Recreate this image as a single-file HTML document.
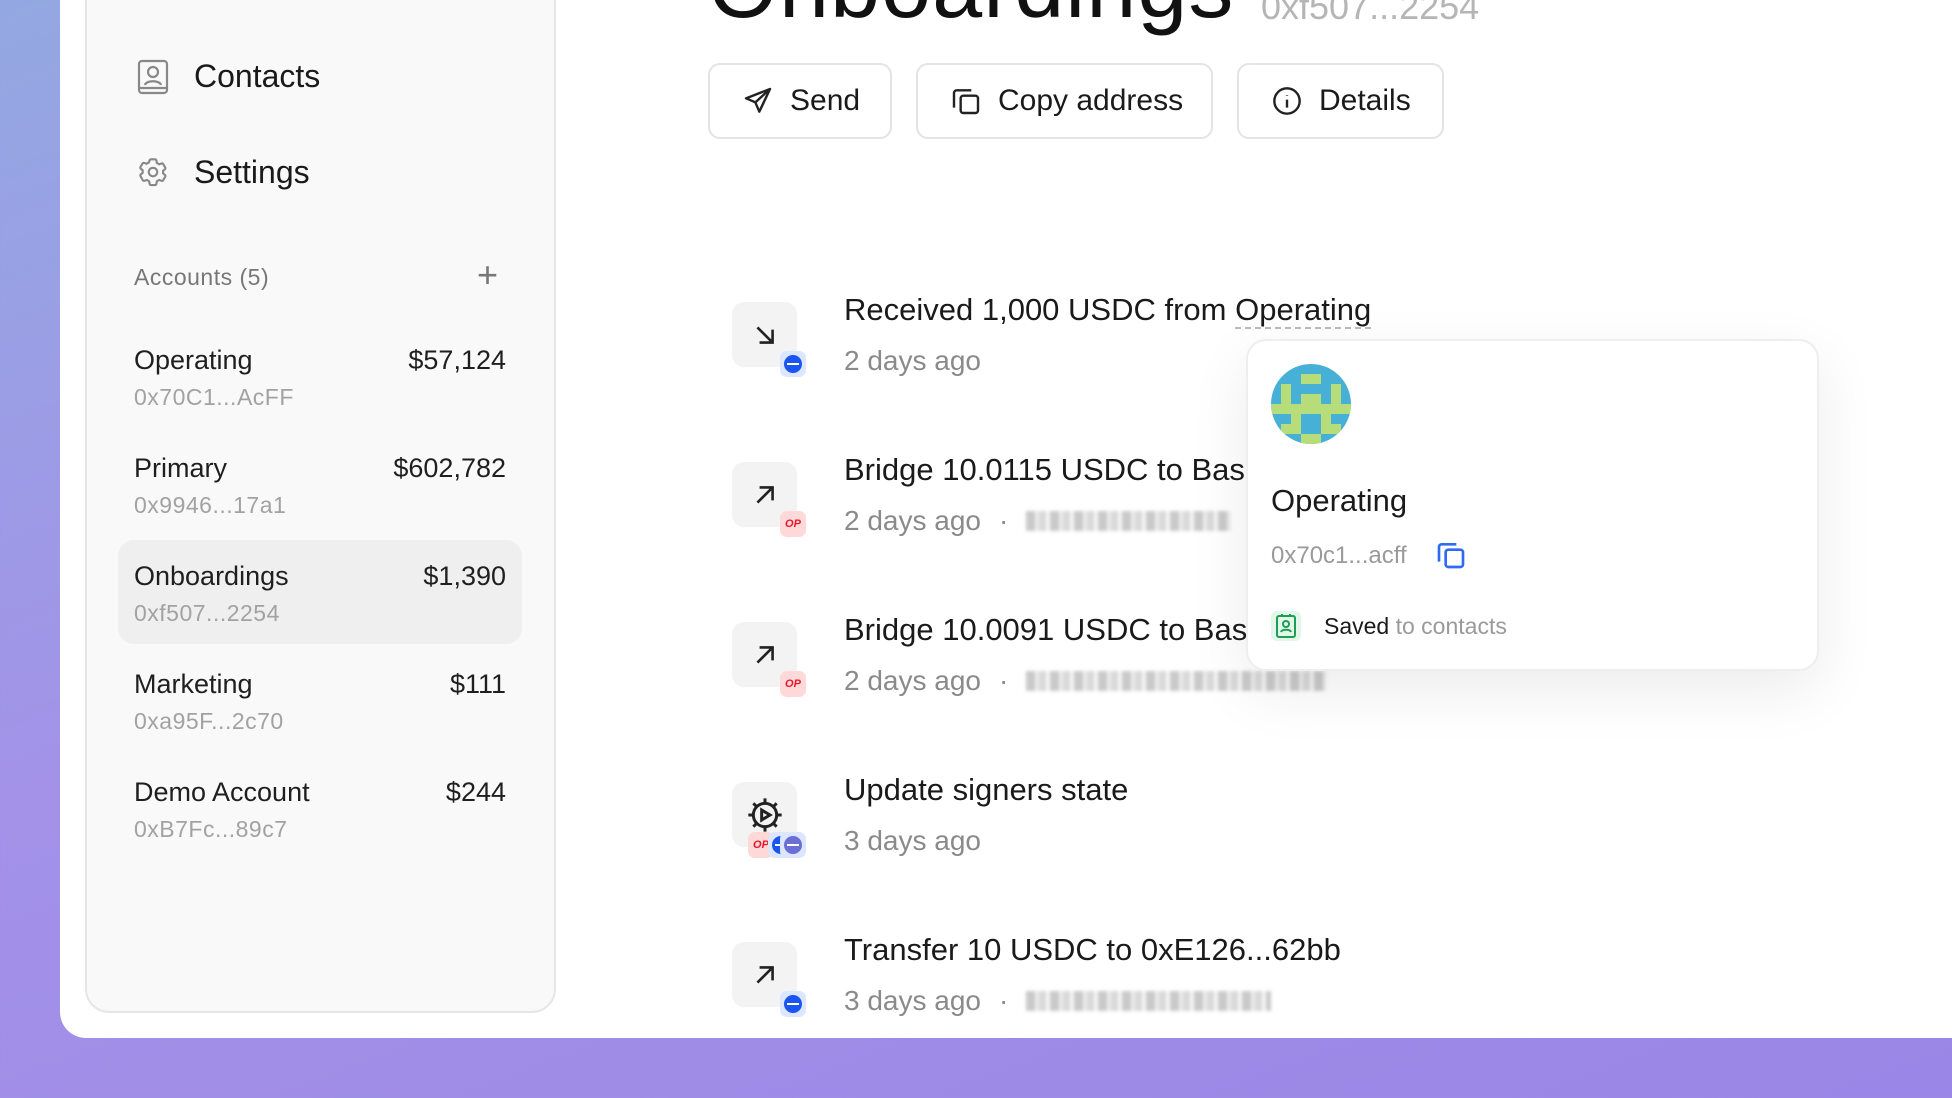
<!DOCTYPE html>
<html><head><meta charset="utf-8"><style>
*{margin:0;padding:0;box-sizing:border-box}
body{width:1952px;height:1098px;overflow:hidden;font-family:"Liberation Sans",sans-serif;background:linear-gradient(160deg,#93a8e2 0%,#a392e8 45%,#9a86e6 100%);position:relative}
.win{position:absolute;left:60px;top:-40px;width:1960px;height:1078px;background:#fff;border-radius:0 0 0 26px}
.side{position:absolute;left:85px;top:-40px;width:471px;height:1053px;background:#f9f9f9;border:2px solid #e6e6e6;border-radius:0 0 24px 24px}
.a{position:absolute}
.nav{font-size:32px;color:#1a1a1a}
.acc{position:absolute;left:134px;width:372px}
.acc .n{font-size:27px;color:#1f1f1f;display:flex;justify-content:space-between}
.acc .d{font-size:23px;color:#a2a2a2;margin-top:8px;letter-spacing:0.5px}
.btn{position:absolute;top:63px;height:76px;border:2px solid #e4e4e4;border-radius:12px;display:flex;align-items:center;font-size:30px;color:#1a1a1a;padding-left:32px;gap:16px}
.ic{position:absolute;left:732px;width:65px;height:65px;background:#f3f3f3;border-radius:12px;display:flex;align-items:center;justify-content:center}
.t{position:absolute;left:844px;font-size:31px;color:#1a1a1a}
.s{position:absolute;left:844px;font-size:28px;color:#8a8a8a;display:flex;align-items:center;gap:18px}
.blur{display:inline-block;height:20px;background:repeating-linear-gradient(90deg,#bdbdbd 0 9px,#e8e8e8 9px 13px,#cfcfcf 13px 20px,#f4f4f4 20px 24px);filter:blur(1.5px);opacity:.8}
.badge{position:absolute;width:26px;height:26px;border-radius:7px;display:flex;align-items:center;justify-content:center}
.op{background:#ffd8d8;color:#e8162b;font-size:11px;font-weight:bold;font-style:italic}
.eth{background:#dce6ff}
.eth i{width:18px;height:18px;border-radius:50%;background:#1b55f0;display:block;position:relative}
.eth i:after{content:"";position:absolute;left:3px;right:3px;top:8px;height:2px;background:#fff}
</style></head><body>
<div class="win"></div>
<div class="side"></div>
<svg class="a" style="left:137px;top:59px" width="32" height="36" viewBox="0 0 32 36" fill="none" stroke="#888" stroke-width="2.2"><rect x="2" y="2" width="28" height="32" rx="3"/><circle cx="16" cy="13" r="5"/><path d="M8 26c1-5 15-5 16 0"/><path d="M2 29h28"/></svg>
<div class="a nav" style="left:194px;top:58px">Contacts</div>
<svg class="a" style="left:136px;top:155px" width="34" height="34" viewBox="0 0 24 24" fill="none" stroke="#888" stroke-width="1.5"><path d="M9.6 3.9c.1-.5.5-.9 1-.9h2.8c.5 0 .9.4 1 .9l.3 1.7c.6.3 1.1.6 1.6 1l1.6-.6c.5-.2 1 0 1.3.4l1.4 2.4c.3.4.2 1-.2 1.3l-1.3 1.1v1.8l1.3 1.1c.4.3.5.9.2 1.3l-1.4 2.4c-.3.4-.8.6-1.3.4l-1.6-.6c-.5.4-1 .7-1.6 1l-.3 1.7c-.1.5-.5.9-1 .9h-2.8c-.5 0-.9-.4-1-.9l-.3-1.7c-.6-.3-1.1-.6-1.6-1l-1.6.6c-.5.2-1 0-1.3-.4L3.2 15c-.3-.4-.2-1 .2-1.3l1.3-1.1v-1.8L3.4 9.7C3 9.4 2.9 8.8 3.2 8.4l1.4-2.4c.3-.4.8-.6 1.3-.4l1.6.6c.5-.4 1-.7 1.6-1z"/><circle cx="12" cy="12" r="3"/></svg>
<div class="a nav" style="left:194px;top:154px">Settings</div>
<div class="a" style="left:134px;top:264px;font-size:23px;color:#777;letter-spacing:.5px">Accounts (5)</div>
<div class="a" style="left:477px;top:254px;font-size:36px;color:#777;font-weight:300">+</div>
<div class="a" style="left:118px;top:540px;width:404px;height:104px;background:#efefef;border-radius:16px"></div>
<div class="acc" style="top:345px"><div class="n"><span>Operating</span><span>$57,124</span></div><div class="d">0x70C1...AcFF</div></div>
<div class="acc" style="top:453px"><div class="n"><span>Primary</span><span>$602,782</span></div><div class="d">0x9946...17a1</div></div>
<div class="acc" style="top:561px"><div class="n"><span>Onboardings</span><span>$1,390</span></div><div class="d">0xf507...2254</div></div>
<div class="acc" style="top:669px"><div class="n"><span>Marketing</span><span>$111</span></div><div class="d">0xa95F...2c70</div></div>
<div class="acc" style="top:777px"><div class="n"><span>Demo Account</span><span>$244</span></div><div class="d">0xB7Fc...89c7</div></div>

<div class="a" style="left:708px;top:-64px;font-size:90px;color:#111;font-weight:500;letter-spacing:1px">Onboardings</div>
<div class="a" style="left:1261px;top:-14px;font-size:36px;color:#b5b5b5">0xf507...2254</div>

<div class="btn" style="left:708px;width:184px"><svg width="32" height="32" viewBox="0 0 24 24" fill="none" stroke="#222" stroke-width="1.8" stroke-linejoin="round"><path d="M21 3L3 10l7 3 3 7z"/><path d="M10 13l11-10"/></svg>Send</div>
<div class="btn" style="left:916px;width:297px"><svg width="32" height="32" viewBox="0 0 24 24" fill="none" stroke="#222" stroke-width="1.8"><rect x="8" y="8" width="13" height="13" rx="2"/><path d="M16 4H5a2 2 0 0 0-2 2v11"/></svg>Copy address</div>
<div class="btn" style="left:1237px;width:207px"><svg width="32" height="32" viewBox="0 0 24 24" fill="none" stroke="#222" stroke-width="1.8"><circle cx="12" cy="12" r="9.5"/><path d="M12 11v6M12 7.5v.5"/></svg>Details</div>

<div class="ic" style="top:302px"><svg width="26" height="26" viewBox="0 0 24 24" fill="none" stroke="#222" stroke-width="2.4"><path d="M5 5l14 14M19 7v12H7"/></svg></div>
<div class="badge eth" style="left:780px;top:351px"><i></i></div>
<div class="t" style="top:292px">Received 1,000 USDC from <span style="border-bottom:2px dashed #bbb">Operating</span></div>
<div class="s" style="top:345px">2 days ago</div>

<div class="ic" style="top:462px"><svg width="26" height="26" viewBox="0 0 24 24" fill="none" stroke="#222" stroke-width="2.4"><path d="M5 19L19 5M7 5h12v12"/></svg></div>
<div class="badge op" style="left:780px;top:511px">OP</div>
<div class="t" style="top:452px">Bridge 10.0115 USDC to Base</div>
<div class="s" style="top:505px">2 days ago <span>·</span><span class="blur" style="width:205px"></span></div>

<div class="ic" style="top:622px"><svg width="26" height="26" viewBox="0 0 24 24" fill="none" stroke="#222" stroke-width="2.4"><path d="M5 19L19 5M7 5h12v12"/></svg></div>
<div class="badge op" style="left:780px;top:671px">OP</div>
<div class="t" style="top:612px">Bridge 10.0091 USDC to Base</div>
<div class="s" style="top:665px">2 days ago <span>·</span><span class="blur" style="width:300px"></span></div>

<div class="ic" style="top:782px"><svg width="40" height="40" viewBox="0 0 24 24" fill="none" stroke="#222" stroke-width="1.8"><circle cx="12" cy="12" r="7"/><path d="M12 2v3M12 19v3M2 12h3M19 12h3M5 5l2 2M17 17l2 2M5 19l2-2M17 7l2-2M10 9l5 3-5 3z"/></svg></div>
<div class="badge op" style="left:748px;top:832px">OP</div>
<div class="badge eth" style="left:768px;top:832px"><i></i></div>
<div class="badge eth" style="left:780px;top:832px"><i style="background:#6a6fd8"></i></div>
<div class="t" style="top:772px">Update signers state</div>
<div class="s" style="top:825px">3 days ago</div>

<div class="ic" style="top:942px"><svg width="26" height="26" viewBox="0 0 24 24" fill="none" stroke="#222" stroke-width="2.4"><path d="M5 19L19 5M7 5h12v12"/></svg></div>
<div class="badge eth" style="left:780px;top:991px"><i></i></div>
<div class="t" style="top:932px">Transfer 10 USDC to 0xE126...62bb</div>
<div class="s" style="top:985px">3 days ago <span>·</span><span class="blur" style="width:245px"></span></div>

<div class="a" style="left:1246px;top:339px;width:573px;height:332px;background:#fff;border:2px solid #eee;border-radius:20px;box-shadow:0 20px 60px rgba(0,0,0,.08)">
<svg class="a" style="left:23px;top:23px" width="80" height="80" viewBox="0 0 8 8"><defs><clipPath id="c"><circle cx="4" cy="4" r="4"/></clipPath></defs><g clip-path="url(#c)"><rect width="8" height="8" fill="#46b0d6"/><path fill="#b7dc7a" d="M3 1h2v1H3zM1 2h1v2H1zM6 2h1v2H6zM3 3h2v1H3zM0 4h8v1H0zM2 5h1v1H2zM5 5h1v1H5zM1 6h2v1H1zM5 6h2v1H5zM3 7h2v1H3z"/></g></svg>
<div class="a" style="left:23px;top:142px;font-size:31px;color:#1a1a1a">Operating</div>
<div class="a" style="left:23px;top:201px;font-size:24px;color:#9a9a9a">0x70c1...acff</div>
<svg class="a" style="left:187px;top:198px" width="32" height="32" viewBox="0 0 24 24" fill="none" stroke="#2f6bf0" stroke-width="2"><rect x="8" y="8" width="13" height="13" rx="2"/><path d="M16 4H5a2 2 0 0 0-2 2v11"/></svg>
<div class="a" style="left:23px;top:270px;width:30px;height:30px;background:#e3f6ea;border-radius:6px"></div>
<svg class="a" style="left:26px;top:272px" width="24" height="26" viewBox="0 0 24 26" fill="none" stroke="#1f9d55" stroke-width="2"><rect x="3" y="3" width="18" height="21" rx="2"/><circle cx="12" cy="11" r="3"/><path d="M7 19c1-3 9-3 10 0M8 1v3M16 1v3"/></svg>
<div class="a" style="left:76px;top:272px;font-size:23px;color:#1a1a1a">Saved <span style="color:#9a9a9a">to contacts</span></div>
</div>
</body></html>
